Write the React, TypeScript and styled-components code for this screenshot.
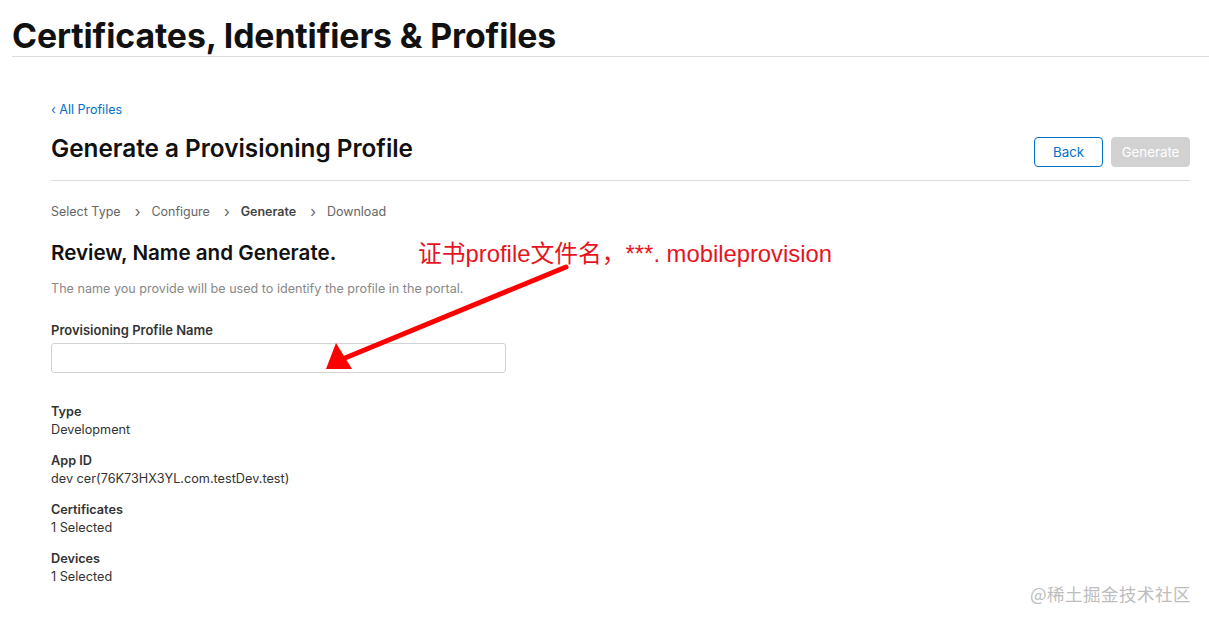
import styled, { createGlobalStyle } from "styled-components";

const GlobalStyle = createGlobalStyle`
  html, body {
    margin: 0;
    padding: 0;
    background: #ffffff;
    font-family: Inter, "Noto Sans", "Noto Sans CJK SC", sans-serif;
    color: #1d1d1f;
  }
`;

const steps = [
  { name: "Select Type", active: false },
  { name: "Configure", active: false },
  { name: "Generate", active: true },
  { name: "Download", active: false },
];

const details = [
  { label: "Type", value: "Development" },
  { label: "App ID", value: "dev cer(76K73HX3YL.com.testDev.test)" },
  { label: "Certificates", value: "1 Selected" },
  { label: "Devices", value: "1 Selected" },
];

const App = () => {
  return (
    <Page>
      <GlobalStyle />
      <TopHeader>
        <SiteTitle>Certificates, Identifiers &amp; Profiles</SiteTitle>
      </TopHeader>
      <Main>
        <BackLink>‹ All Profiles</BackLink>
        <TitleRow>
          <PageTitle>Generate a Provisioning Profile</PageTitle>
          <Actions>
            <Button variant="outline">Back</Button>
            <Button variant="disabled">Generate</Button>
          </Actions>
        </TitleRow>
        <Steps>
          {steps.map((s, i) => (
            <Step key={s.name} active={s.active}>
              {i > 0 && <Chevron>›</Chevron>}
              {s.name}
            </Step>
          ))}
        </Steps>
        <SectionTitle>Review, Name and Generate.</SectionTitle>
        <Description>
          The name you provide will be used to identify the profile in the portal.
        </Description>
        <FieldLabel>Provisioning Profile Name</FieldLabel>
        <TextInput />
        <DetailList>
          {details.map((d) => (
            <Detail key={d.label}>
              <DetailLabel>{d.label}</DetailLabel>
              <DetailValue>{d.value}</DetailValue>
            </Detail>
          ))}
        </DetailList>
      </Main>

      <Annotation>证书profile文件名，***. mobileprovision</Annotation>
      <ArrowLayer width="1209" height="622" viewBox="0 0 1209 622">
        <line x1="566" y1="267" x2="345" y2="358" stroke="#f00" strokeWidth="5" strokeLinecap="round" />
        <polygon points="326,369 336,343 352,369" fill="#f00" />
      </ArrowLayer>
      <Watermark>@稀土掘金技术社区</Watermark>
    </Page>
  );
};

export default App;

const Page = styled.div`
  position: relative;
  width: 1209px;
  height: 622px;
  overflow: hidden;
`;

const TopHeader = styled.div`
  margin-left: 12px;
  padding-top: 16px;
  border-bottom: 1px solid #dcdcdc;
  box-sizing: border-box;
  height: 57px;
`;

const SiteTitle = styled.h1`
  margin: 0;
  font-size: 33.8px;
  line-height: 40px;
  font-weight: 700;
  color: #111;
  letter-spacing: -0.1px;
`;

const Main = styled.div`
  padding: 44px 19px 0 51px;
  display: flex;
  flex-direction: column;
`;

const BackLink = styled.a`
  font-size: 12.5px;
  line-height: 18px;
  color: #0070c9;
  cursor: pointer;
`;

const TitleRow = styled.div`
  display: flex;
  justify-content: space-between;
  align-items: center;
  margin-top: 10px;
  padding-bottom: 13px;
  border-bottom: 1px solid #dcdcdc;
`;

const PageTitle = styled.h2`
  margin: 0;
  font-size: 24.3px;
  line-height: 28px;
  font-weight: 600;
  color: #111;
`;

const Actions = styled.div`
  display: flex;
  gap: 8px;
  margin-top: 8px;
`;

const Button = styled.button<{ variant: "outline" | "disabled" }>`
  height: 30px;
  padding: 0;
  width: ${({ variant }) => (variant === "outline" ? "69px" : "79px")};
  font-family: inherit;
  font-size: 13.3px;
  border-radius: 4px;
  border: 1px solid ${({ variant }) => (variant === "outline" ? "#0070c9" : "#d2d2d2")};
  background: ${({ variant }) => (variant === "outline" ? "#fff" : "#d2d2d2")};
  color: ${({ variant }) => (variant === "outline" ? "#0070c9" : "#fff")};
`;

const Steps = styled.div`
  display: flex;
  margin-top: 22px;
  font-size: 12.5px;
  line-height: 18px;
`;

const Step = styled.span<{ active: boolean }>`
  color: ${({ active }) => (active ? "#444" : "#666")};
  font-weight: ${({ active }) => (active ? 600 : 400)};
  display: inline-flex;
  align-items: center;
`;

const Chevron = styled.span`
  color: #666;
  font-weight: 400;
  margin: 0 11px 0 14px;
  font-size: 15px;
`;

const SectionTitle = styled.h3`
  margin: 19px 0 0;
  font-size: 20.6px;
  line-height: 26px;
  font-weight: 600;
  color: #111;
`;

const Description = styled.p`
  margin: 15px 0 0;
  font-size: 12.6px;
  line-height: 16px;
  color: #888;
`;

const FieldLabel = styled.label`
  margin-top: 25px;
  font-size: 13px;
  line-height: 16px;
  font-weight: 600;
  color: #333;
`;

const TextInput = styled.input`
  margin-top: 5px;
  width: 455px;
  height: 30px;
  box-sizing: border-box;
  border: 1px solid #d2d2d2;
  border-radius: 3px;
  outline: none;
`;

const DetailList = styled.div`
  margin-top: 30px;
  display: flex;
  flex-direction: column;
  gap: 13px;
`;

const Detail = styled.div`
  display: flex;
  flex-direction: column;
`;

const DetailLabel = styled.div`
  font-size: 12.7px;
  line-height: 18px;
  font-weight: 600;
  color: #333;
`;

const DetailValue = styled.div`
  font-size: 12.7px;
  line-height: 18px;
  color: #333;
`;

const Annotation = styled.div`
  position: absolute;
  left: 418px;
  top: 239px;
  font-family: "Liberation Sans", "Noto Sans CJK SC", sans-serif;
  font-size: 23.8px;
  line-height: 30px;
  color: #e6141e;
  white-space: nowrap;
`;

const ArrowLayer = styled.svg`
  position: absolute;
  left: 0;
  top: 0;
  pointer-events: none;
`;

const Watermark = styled.div`
  position: absolute;
  right: 18px;
  bottom: 16px;
  font-family: "Noto Sans CJK SC", sans-serif;
  font-size: 17.5px;
  color: #bdbdbd;
  letter-spacing: 0.5px;
`;
